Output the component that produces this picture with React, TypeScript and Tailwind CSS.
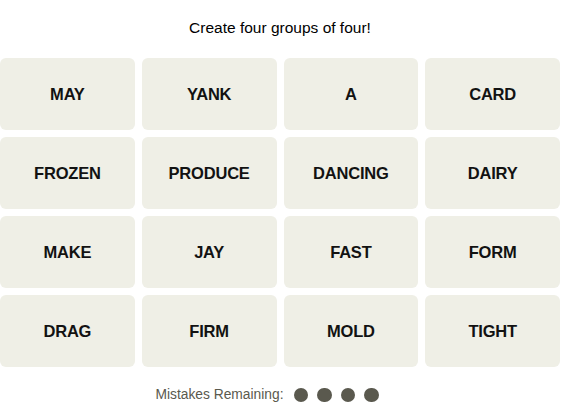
const words = [
  'MAY', 'YANK', 'A', 'CARD',
  'FROZEN', 'PRODUCE', 'DANCING', 'DAIRY',
  'MAKE', 'JAY', 'FAST', 'FORM',
  'DRAG', 'FIRM', 'MOLD', 'TIGHT',
];

export default function App() {
  return (
    <div className="w-[560px] bg-white" style={{ fontFamily: '"Liberation Sans", Arial, sans-serif' }}>
      {/* instructions */}
      <p className="pt-[18px] mb-[20px] text-center text-[15.5px] leading-[20px] text-black">
        Create four groups of four!
      </p>

      {/* word grid */}
      <div className="grid grid-cols-4 gap-[7px]">
        {words.map((w) => (
          <button
            key={w}
            className="h-[72px] rounded-[6px] bg-[#efefe6] flex items-center justify-center pt-[1px] text-[16.5px] font-bold tracking-[-0.2px] uppercase text-[#121212]"
          >
            {w}
          </button>
        ))}
      </div>

      {/* mistakes */}
      <div className="mt-[20px] h-[16px] flex items-center justify-center pr-[26px] gap-[10px]">
        <span className="text-[13.8px] text-[#5a594e]">Mistakes Remaining:</span>
        <div className="flex gap-[9px]">
          {[0, 1, 2, 3].map((i) => (
            <span key={i} className="w-[14.5px] h-[14.5px] rounded-full bg-[#5a594e]" />
          ))}
        </div>
      </div>
    </div>
  );
}
